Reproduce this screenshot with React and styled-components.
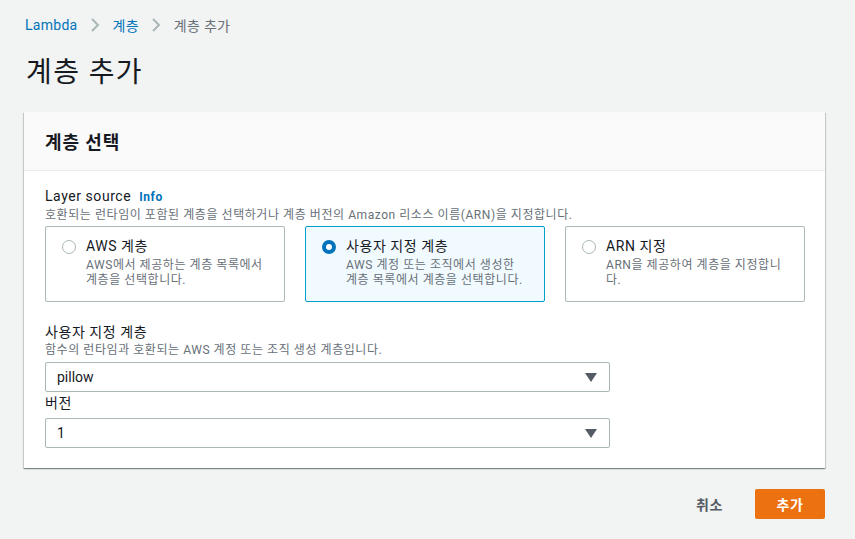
import styled, { createGlobalStyle } from 'styled-components'

const GlobalStyle = createGlobalStyle`
  body {
    margin: 0;
    background: #f2f3f3;
    font-family: Roboto, "Noto Sans CJK KR", sans-serif;
    letter-spacing: 0.035em;
    color: #16191f;
  }
`

const Page = styled.div`
  padding: 13px 30px 20px 24px;
`

const Crumbs = styled.nav`
  display: flex;
  align-items: center;
  height: 24px;
  padding-left: 1px;
  font-size: 14px;
  letter-spacing: 0.02em;
`

const Crumb = styled.span`
  color: ${p => (p.current ? '#687078' : '#0073bb')};
`

const Sep = styled.span`
  display: flex;
  align-items: center;
  margin: 0 13px 0 12px;
  color: #aab7b8;
`

const Title = styled.h1`
  margin: 16px 0 0 2px;
  font-size: 28px;
  font-weight: 400;
  line-height: 40px;
  letter-spacing: 0.05em;
  color: #16191f;
`

const Panel = styled.section`
  margin-top: 19px;
  background: #fff;
  box-shadow: 0 1px 1px 0 rgba(0, 28, 36, 0.3), 1px 1px 1px 0 rgba(0, 28, 36, 0.15),
    -1px 1px 1px 0 rgba(0, 28, 36, 0.15);
`

const PanelHeader = styled.header`
  height: 58px;
  display: flex;
  align-items: center;
  padding: 0 21px;
  background: #fafafa;
  border-bottom: 1px solid #eaeded;
  font-size: 18px;
  font-weight: 700;
  letter-spacing: 0.05em;
`

const PanelBody = styled.div`
  padding: 15px 20px 20px 21px;
`

const Label = styled.div`
  font-size: 14px;
  line-height: 20px;
  color: #16191f;
`

const Info = styled.span`
  margin-left: 8px;
  font-size: 12px;
  font-weight: 700;
  color: #0073bb;
`

const Hint = styled.div`
  font-size: 12px;
  line-height: 16px;
  color: #687078;
`

const Tiles = styled.div`
  display: grid;
  grid-template-columns: repeat(3, 240px);
  gap: 20px;
  margin-top: 3px;
`

const Tile = styled.div`
  height: 76px;
  box-sizing: border-box;
  display: flex;
  gap: 10px;
  padding: 9px 16px 9px 16px;
  border: 1px solid ${p => (p.selected ? '#00a1c9' : '#aab7b8')};
  background: ${p => (p.selected ? '#f1faff' : '#fff')};
  border-radius: 2px;
`

const Radio = styled.span`
  flex: none;
  width: 14px;
  height: 14px;
  margin-top: 4px;
  box-sizing: border-box;
  border-radius: 50%;
  border: ${p => (p.checked ? '4px solid #0073bb' : '1px solid #aab7b8')};
  background: #fff;
`

const TileText = styled.div`
  display: flex;
  flex-direction: column;
  min-width: 0;
`

const TileTitle = styled.div`
  font-size: 14px;
  line-height: 20px;
`

const TileHint = styled.div`
  font-size: 12px;
  line-height: 15px;
  color: #687078;
  margin-top: 2px;
`

const Field = styled.div`
  margin-top: ${p => p.top || 0}px;
  width: 565px;
`

const Select = styled.div`
  height: 30px;
  box-sizing: border-box;
  margin-top: ${p => p.gap || 4}px;
  display: flex;
  align-items: center;
  justify-content: space-between;
  padding: 0 12px 0 11px;
  border: 1px solid #aab7b8;
  border-radius: 2px;
  background: #fff;
  font-size: 14px;
  letter-spacing: 0;
`

const Actions = styled.div`
  display: flex;
  justify-content: flex-end;
  align-items: center;
  gap: 20px;
  margin-top: 21px;
`

const LinkButton = styled.button`
  border: none;
  background: none;
  padding: 4px 12px;
  font-family: inherit;
  font-size: 14px;
  font-weight: 700;
  letter-spacing: inherit;
  color: #545b64;
`

const Primary = styled.button`
  width: 70px;
  height: 30px;
  border: none;
  border-radius: 2px;
  background: #ec7211;
  color: #fff;
  font-family: inherit;
  font-size: 14px;
  font-weight: 700;
  letter-spacing: inherit;
`

const Chevron = () => (
  <svg width="10" height="16" viewBox="0 0 10 16" fill="none">
    <path d="M2 2l6 6-6 6" stroke="currentColor" strokeWidth="2" />
  </svg>
)

const Caret = () => (
  <svg width="12" height="10" viewBox="0 0 12 10">
    <path d="M0 1h12L6 10z" fill="#545b64" />
  </svg>
)

const tiles = [
  { title: 'AWS 계층', hint: 'AWS에서 제공하는 계층 목록에서 계층을 선택합니다.' },
  { title: '사용자 지정 계층', hint: 'AWS 계정 또는 조직에서 생성한 계층 목록에서 계층을 선택합니다.', selected: true },
  { title: 'ARN 지정', hint: 'ARN을 제공하여 계층을 지정합니다.' },
]

export default function App() {
  return (
    <Page>
      <GlobalStyle />
      <Crumbs>
        <Crumb>Lambda</Crumb>
        <Sep><Chevron /></Sep>
        <Crumb>계층</Crumb>
        <Sep><Chevron /></Sep>
        <Crumb current>계층 추가</Crumb>
      </Crumbs>
      <Title>계층 추가</Title>
      <Panel>
        <PanelHeader>계층 선택</PanelHeader>
        <PanelBody>
          <Label>
            Layer source<Info>Info</Info>
          </Label>
          <Hint>호환되는 런타임이 포함된 계층을 선택하거나 계층 버전의 Amazon 리소스 이름(ARN)을 지정합니다.</Hint>
          <Tiles>
            {tiles.map(t => (
              <Tile key={t.title} selected={t.selected}>
                <Radio checked={t.selected} />
                <TileText>
                  <TileTitle>{t.title}</TileTitle>
                  <TileHint>{t.hint}</TileHint>
                </TileText>
              </Tile>
            ))}
          </Tiles>
          <Field top={20}>
            <Label>사용자 지정 계층</Label>
            <Hint>함수의 런타임과 호환되는 AWS 계정 또는 조직 생성 계층입니다.</Hint>
            <Select>
              pillow
              <Caret />
            </Select>
          </Field>
          <Field top={1}>
            <Label>버전</Label>
            <Select gap={5}>
              1
              <Caret />
            </Select>
          </Field>
        </PanelBody>
      </Panel>
      <Actions>
        <LinkButton>취소</LinkButton>
        <Primary>추가</Primary>
      </Actions>
    </Page>
  )
}
